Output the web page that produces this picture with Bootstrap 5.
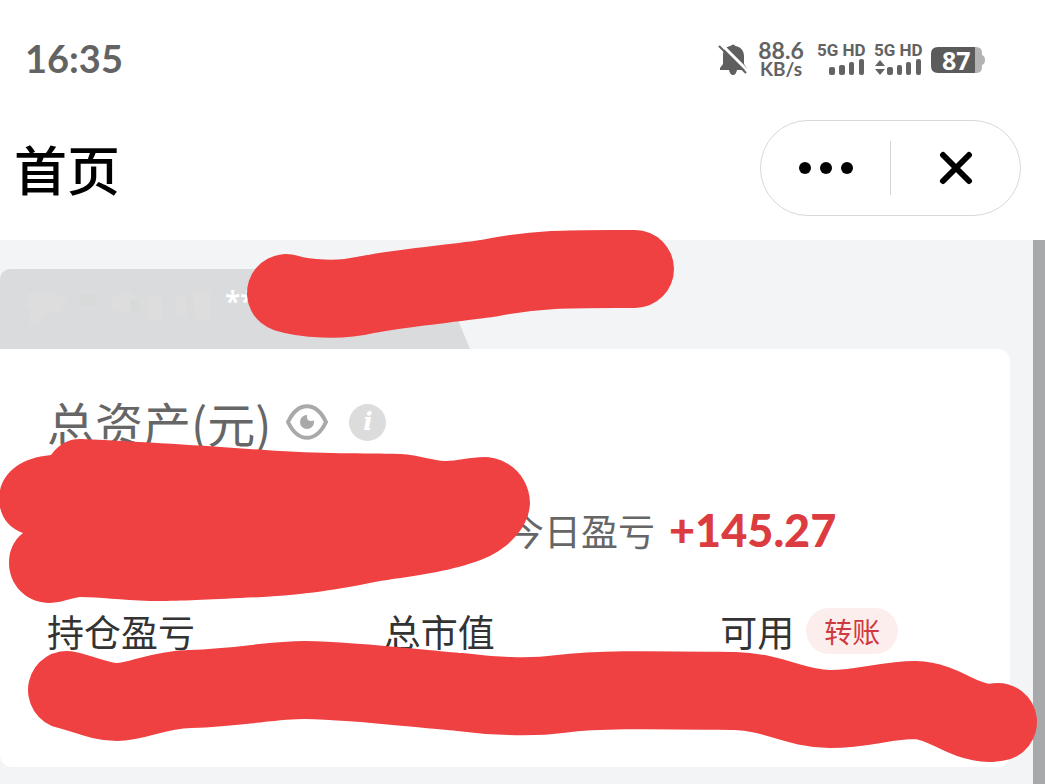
<!DOCTYPE html>
<html lang="zh-CN">
<head>
<meta charset="utf-8">
<meta name="viewport" content="width=device-width, initial-scale=1">
<title>首页</title>
<link href="https://cdn.jsdelivr.net/npm/bootstrap@5.3.0/dist/css/bootstrap.min.css" rel="stylesheet">
<style>
  body { font-family: "Noto Sans CJK SC", sans-serif; color: #333; background: #fff; overflow-x: hidden; }
  svg { display: block; flex: none; }
  .status { height: 120px; padding: 0 60px 0 25px; color: #636363; }
  .clock { font: 700 38px/44px Lato, sans-serif; padding-bottom: 4px; }
  .speed { font: 700 23px/20px Lato, sans-serif; width: 48px; padding-bottom: 2px; }
  .speed-unit { font-size: 19px; line-height: 18px; }
  .sim { font: 700 17px/16px Roboto, sans-serif; width: 49px; white-space: nowrap; padding-bottom: 2px; }
  .battery { width: 54px; height: 28px; }
  .battery-num { font: 700 25px/28px "Noto Sans", sans-serif; color: #fff; left: 11px; top: 0; }
  .titlebar { height: 120px; padding: 0 24px 24px 14px; }
  .page-title { font-size: 53px; line-height: 64px; font-weight: 500; color: #000; }
  .capsule { width: 261px; height: 96px; border: 1px solid #d8d8d8; border-radius: 48px; }
  .capsule button, .bare { border: 0; background: none; padding: 0; }
  .capsule button { flex: 1 1 0; }
  .capsule-line { width: 1px; height: 54px; background: #d4d4d4; }
  .main-area { background: #f3f4f6; }
  .content { padding: 29px 23px 17px 0; }
  .rail { width: 12px; background: #a8a9ab; }
  .account { width: 470px; height: 80px; background: #dadbdd; border-top-left-radius: 10px; clip-path: polygon(0 0, 437px 0, 100% 100%, 0 100%); }
  .stars { font: 600 28px/36px "Noto Sans", sans-serif; color: #fff; padding: 14px 0 0 14px; }
  .assets { background: #fff; border-radius: 0 12px 12px 12px; padding: 46px 0 64px; }
  .inset { padding-left: 47px; }
  .total { font-size: 48px; line-height: 54px; color: #666; }
  .profit-row { padding-top: 53px; }
  .today { font-size: 37px; line-height: 56px; color: #666; padding-left: 2px; }
  .gain { font: 900 45px/56px Lato, sans-serif; color: #dc3c40; margin-left: 14px; }
  .label-row { padding-top: 49px; padding-bottom: 48px; }
  .label-text { font-size: 37px; line-height: 48px; }
  .transfer { font-size: 28px; line-height: 46px; width: 92px; margin-left: 12px; background: #fdeeee; color: #cf3a40; border-radius: 23px; }
  .eye { margin-left: 14px; }
  .info-dot { width: 37px; height: 37px; margin-left: 20px; border-radius: 50%; background: #dcdcdc; color: #fff; font: italic 700 25px/36px "DejaVu Serif", serif; }
  .paint { left: 0; top: -20px; width: 100%; pointer-events: none; }
</style>
</head>
<body class="d-flex flex-column min-vh-100">
<header>
  <div class="status d-flex align-items-center justify-content-between">
    <span class="clock">16:35</span>
    <div class="d-flex align-items-center">
      <svg width="32" height="34" viewBox="0 0 32 34" class="me-2" aria-hidden="true">
        <path fill="#5f5f5f" d="M7 7C9 4 12 3 13.500 3Q16 0 18.500 3C24 4 27 8 27 13V21L30 25V27H20Q19 32 16 32T12 27H3V25L6 21V13Q6 9 7 7Z"/>
        <path stroke="#fff" stroke-width="3" d="M4 1L31 28"/>
        <path stroke="#5f5f5f" stroke-width="2" d="M2 3L29 30"/>
      </svg>
      <div class="speed text-center"><div>88.6</div><div class="speed-unit">KB/s</div></div>
      <div class="sim ms-2 me-1 ps-1">5G HD
        <svg width="49" height="18" viewBox="0 0 49 18" fill="#636363" aria-hidden="true"><rect x="12" y="9" width="6" height="8" rx="2"/><rect x="22" y="7" width="6" height="10" rx="2"/><rect x="32" y="4" width="5" height="13" rx="2"/><rect x="42" y="1" width="5" height="16" rx="2"/></svg>
      </div>
      <div class="sim ms-2">5G HD
        <svg width="49" height="18" viewBox="0 0 49 18" fill="#636363" aria-hidden="true"><path d="M1 8L6 2L11 8ZM1 11H11L6 17Z"/><rect x="13" y="9" width="6" height="8" rx="2"/><rect x="23" y="7" width="5" height="10" rx="2"/><rect x="32" y="4" width="5" height="13" rx="2"/><rect x="42" y="1" width="5" height="16" rx="2"/></svg>
      </div>
      <div class="battery position-relative ms-2">
        <svg width="54" height="28" viewBox="0 0 54 28" aria-hidden="true"><path fill="#b3b3b3" d="M40 1H45Q51 1 51 7V9Q54 10 54 14T51 19V21Q51 27 45 27H40Z"/><path fill="#5b5b5b" d="M7 1H44V27H7Q0 27 0 20V8Q0 1 7 1Z"/></svg>
        <span class="battery-num position-absolute">87</span>
      </div>
    </div>
  </div>
  <div class="titlebar d-flex align-items-center justify-content-between">
    <h1 class="page-title m-0">首页</h1>
    <div class="capsule d-flex align-items-center">
      <button type="button" class="d-flex justify-content-center" aria-label="更多"><svg width="56" height="14" viewBox="0 0 56 14"><circle cx="7" cy="7" r="6"/><circle cx="28" cy="7" r="6"/><circle cx="49" cy="7" r="6"/></svg></button>
      <span class="capsule-line"></span>
      <button type="button" class="d-flex justify-content-center" aria-label="关闭"><svg width="34" height="34" viewBox="0 0 34 34"><path d="M4 4L30 30M30 4L4 30" stroke="#000" stroke-width="6" stroke-linecap="round"/></svg></button>
    </div>
  </div>
</header>
<main class="main-area flex-grow-1 d-flex position-relative">
  <div class="content flex-grow-1">
    <div class="account d-flex">
      <svg width="211" height="80" viewBox="0 0 211 80" aria-hidden="true">
        <path fill="#dddddd" d="M28 24h28l12 7-8 13H46l-8 12h-8V38h-4zM110 28l18-6 14 12-6 8h-22zM148 28h14v24h-14zM176 28h10v20h-10zM192 24l18-2v30h-14z"/>
        <path fill="#d8d9d9" d="M80 25h16v12H80zM130 30h10v12h-10z"/>
      </svg>
      <span class="stars">**</span>
    </div>
    <section class="assets">
      <div class="inset d-flex align-items-center">
        <span class="total">总资产(元)</span>
        <button type="button" class="bare eye" aria-label="显示金额"><svg width="44" height="36" viewBox="0 0 44 36"><path d="M3 18C13-3 31-3 41 18C31 39 13 39 3 18Z" fill="#fff" stroke="#a9a9a9" stroke-width="4" stroke-linejoin="round"/><circle cx="22" cy="18" r="7" fill="#a9a9a9"/><circle cx="26" cy="13" r="4" fill="#fff"/></svg></button>
        <button type="button" class="bare info-dot text-center" aria-label="说明">i</button>
      </div>
      <div class="profit-row row g-0">
        <div class="col-6 offset-6 d-flex align-items-center">
          <span class="today">今日盈亏</span><span class="gain">+145.27</span>
        </div>
      </div>
      <div class="label-row row g-0">
        <div class="col-4 inset label-text">持仓盈亏</div>
        <div class="col-4 inset label-text">总市值</div>
        <div class="col-4 inset label-text d-flex align-items-center">可用<button type="button" class="bare transfer">转账</button></div>
      </div>
    </section>
  </div>
  <div class="rail"></div>
  <svg class="paint position-absolute" viewBox="0 220 1045 564" aria-hidden="true">
    <g fill="none" stroke="#ef4142" stroke-width="78" stroke-linecap="round" stroke-linejoin="round">
      <path d="M286 293C305 299 340 301 365 295C405 287 450 284 490 278C540 268 575 269 635 269"/>
      <path d="M67 690C85 694 100 702 117 702C138 702 155 690 190 689C245 687 270 680 305 680C360 681 420 689 460 692C490 696 530 698 560 694C600 689 650 690 735 691C775 692 795 709 830 709C865 709 885 700 915 700C945 701 960 722 990 723L998 722"/>
    </g>
    <path fill="#ef4142" d="M51 455C60 443 69 439 80 439C150 442 205 446 265 450C320 454 365 453 400 454C420 455 434 461 445 461C457 461 470 457 485 457C512 458 530 480 530 503C529 530 505 552 475 562C445 572 420 575 380 581C335 590 300 596 240 598C200 600 180 601 150 601C120 600 100 597 80 597C68 599 60 603 48 603C25 602 9 584 9 563C9 550 14 540 23 533C8 528-1 515-1 498C0 475 18 458 51 455Z"/>
  </svg>
</main>
<script src="https://cdn.jsdelivr.net/npm/bootstrap@5.3.0/dist/js/bootstrap.bundle.min.js"></script>
</body>
</html>
